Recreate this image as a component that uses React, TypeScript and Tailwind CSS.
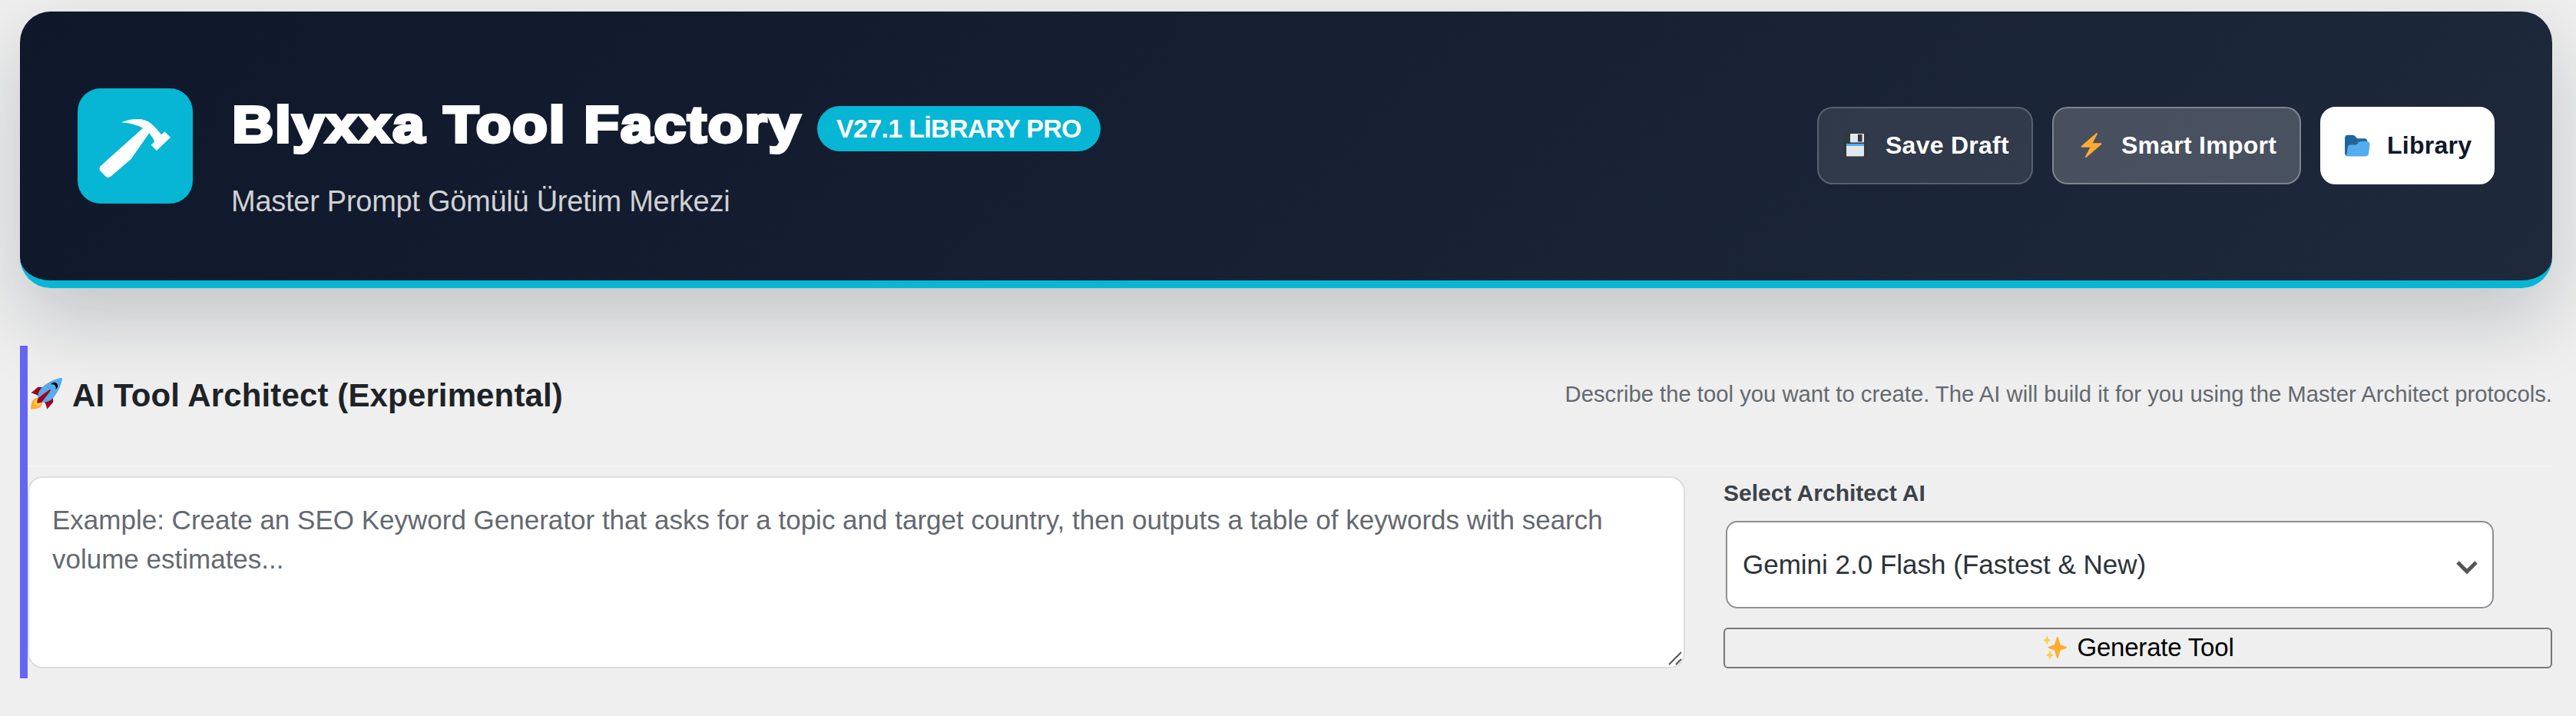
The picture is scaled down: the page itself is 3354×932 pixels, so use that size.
import React from 'react';

interface HeaderButtonProps {
  icon: React.ReactNode;
  label: string;
  className: string;
}

function HeaderButton({ icon, label, className }: HeaderButtonProps) {
  return (
    <button className={`flex h-[101px] items-center rounded-[20px] border-2 pb-px text-[32px] font-bold tracking-[0.25px] whitespace-nowrap ${className}`}>
      <span className="w-[55px]">{icon}</span>
      {label}
    </button>
  );
}

function HammerIcon() {
  return (
    <svg viewBox="0 0 150 150" className="h-[150px] w-[150px]" fill="#fff">
      <path d="M57 44.3Q67 40 78 40Q89 40 95.7 45.7Q103 52 109 60.3L113.3 56.3L121 63.7L103 81L95.7 73.7L100.3 69.3Q98 64 93.3 58.3L71 90Q70 92 68 93.5L43.5 114.5Q40 117 37 115L29.5 107.5Q27.5 104.5 29.5 101.5L85 51.7Q72 45 57 44.3Z" />
    </svg>
  );
}

function FloppyIcon() {
  return (
    <svg viewBox="0 0 32 32" className="h-8 w-8">
      <path fill="#31373d" d="M2 0h28a2 2 0 0 1 2 2v28a2 2 0 0 1-2 2H4l-4-3V2a2 2 0 0 1 2-2z" />
      <rect x="9" y="1" width="18" height="11.5" rx="1" fill="#e1e8ed" />
      <rect x="19" y="2" width="5.5" height="9.5" fill="#31373d" />
      <rect x="4" y="14" width="23" height="16.5" rx="1" fill="#e1e8ed" />
      <path fill="#55acee" d="M5 14h21a1 1 0 0 1 1 1v2H4v-2a1 1 0 0 1 1-1z" />
    </svg>
  );
}

function BoltIcon() {
  return (
    <svg viewBox="0 0 36 36" className="h-8 w-8" fill="#ffac33">
      <path d="M32.938 15.651C32.792 15.26 32.418 15 32 15H19.925L26.89 1.458c.219-.426.106-.947-.271-1.243C26.437.071 26.218 0 26 0c-.233 0-.466.082-.653.243L18 6.588 3.347 19.243c-.316.273-.43.714-.284 1.105S3.582 21 4 21h12.075L9.11 34.542c-.219.426-.106.947.271 1.243.182.144.401.215.619.215.233 0 .466-.082.653-.243L18 29.412l14.653-12.655c.317-.273.43-.714.285-1.106z" />
    </svg>
  );
}

function FolderIcon() {
  return (
    <svg viewBox="0 0 36 36" className="h-[33px] w-[33px]">
      <path fill="#226699" d="M0 29c0 2.209 1.791 4 4 4h24c2.209 0 4-1.791 4-4V12c0-2.209-1.791-4-4-4h-9c-3.562 0-3-5-8.438-5H4C1.791 3 0 4.791 0 7v22z" />
      <path fill="#55acee" d="M30 12h-6.562C18 12 18.562 17 15 17H8c-2.209 0-4 1.791-4 4l-1 8c-.2 2-1 3-2 3 1 1 2 1 3 1h26c2.209 0 4-1.791 4-4l1.5-13c0-2.209-1.791-4-4-4z" />
    </svg>
  );
}

function RocketIcon() {
  return (
    <svg viewBox="0 0 36 36" className="h-[42px] w-[42px]">
      <path fill="#a0041e" d="M1 17l8-7 16 1 1 16-7 8s.001-5.999-6-12-12-6-12-6z" />
      <path fill="#ffac33" d="M.973 35s-.036-7.979 2.985-11S15 21.187 15 21.187 14.999 29 11.999 32c-3 3-11.026 3-11.026 3z" />
      <circle fill="#ffcc4d" cx="9" cy="27" r="4" />
      <path fill="#55acee" d="M35.999 0s-10 0-22 10c-6 5-6 14-4 16s11 2 16-4c10-12 10-22 10-22z" />
      <path d="M26.999 5c-1.623 0-3.013.971-3.641 2.36.502-.227 1.055-.36 1.641-.36 2.209 0 4 1.791 4 4 0 .586-.133 1.139-.359 1.64 1.389-.627 2.359-2.017 2.359-3.64 0-2.209-1.791-4-4-4z" />
      <path fill="#a0041e" d="M8 28s0-4 1-5 13.001-10.999 14-10-9.001 13-10.001 14S8 28 8 28z" />
    </svg>
  );
}

function SparklesIcon() {
  return (
    <svg viewBox="0 0 36 36" className="h-[32px] w-[32px]">
      <path fill="#ffac33" d="M34.347 16.893l-8.899-3.294-3.323-10.891c-.128-.42-.517-.708-.956-.708-.439 0-.828.288-.956.708l-3.322 10.891-8.9 3.294c-.393.146-.653.519-.653.938 0 .418.26.793.653.938l8.895 3.293 3.324 11.223c.126.424.516.715.959.715.442 0 .833-.291.959-.716l3.324-11.223 8.896-3.293c.391-.144.652-.518.652-.937 0-.418-.261-.792-.653-.938z" />
      <path fill="#ffcc4d" d="M14.347 27.894l-2.314-.856-.9-3.3c-.118-.436-.513-.738-.964-.738-.451 0-.846.302-.965.737l-.9 3.3-2.313.856c-.393.146-.653.52-.653.938 0 .418.26.793.653.938l2.301.853.907 3.622c.112.444.511.756.97.756.459 0 .858-.312.97-.757l.907-3.622 2.301-.853c.393-.144.653-.519.653-.937 0-.418-.26-.793-.653-.937z" />
      <path fill="#ffcc4d" d="M10.009 6.231l-2.364-.875-.876-3.365c-.145-.393-.519-.653-.938-.653-.418 0-.792.26-.938.653l-.875 3.365-2.365.875c-.393.146-.653.52-.653.938 0 .418.26.793.653.938l2.365.875.875 3.365c.146.393.52.653.938.653.418 0 .792-.26.938-.653l.875-3.365 2.365-.875c.393-.146.653-.52.653-.938 0-.418-.26-.792-.653-.938z" />
    </svg>
  );
}

export default function App() {
  return (
    <div className="h-[932px] w-[3354px] overflow-hidden bg-[#efefef] pt-[15px] pr-[31px] pl-[26px] font-['Liberation_Sans',Arial,sans-serif]">
      <header className="flex h-[360px] items-center justify-between rounded-[40px] border-b-[10px] border-[#06b6d4] bg-linear-[135deg,#0f172a,#1e293b] px-[75px] shadow-[0_40px_100px_rgba(15,23,42,0.2)]">
        <div className="flex items-center gap-[50px]">
          <div className="h-[150px] w-[150px] rounded-[30px] bg-[#06b6d4]">
            <HammerIcon />
          </div>
          <div className="pt-[28px]">
            <div className="flex h-[90px] items-center">
              <h1 className="w-[763px] origin-left scale-x-[1.13] pb-[10px] pl-px text-[66px] font-bold tracking-[1.8px] whitespace-nowrap text-white [-webkit-text-stroke:4px_white]">Blyxxa Tool Factory</h1>
              <span className="flex h-[59px] w-[369px] items-center justify-center rounded-[30px] bg-[#06b6d4] text-[34px] font-bold tracking-[-0.7px] whitespace-nowrap text-white">V27.1 LİBRARY PRO</span>
            </div>
            <p className="mt-[26px] text-[38px] leading-[48px] tracking-[-0.27px] text-[#cfd1d4]">Master Prompt Gömülü Üretim Merkezi</p>
          </div>
        </div>
        <div className="flex gap-[25px] pb-px">
          <HeaderButton icon={<FloppyIcon />} label="Save Draft" className="w-[281px] border-white/20 bg-white/10 pl-[32px] text-white" />
          <HeaderButton icon={<BoltIcon />} label="Smart Import" className="w-[324px] border-white/30 bg-white/20 pl-[33px] text-white" />
          <HeaderButton icon={<FolderIcon />} label="Library" className="w-[227px] border-white bg-white pl-[30px] text-[#0f172a]" />
        </div>
      </header>

      <section className="mt-[75px] h-[433px] border-l-[10px] border-[#6366f1]">
        <div className="flex h-[158px] items-center justify-between border-b-2 border-[#f0f4f8] pb-[28px]">
          <h2 className="flex items-center pt-px pl-[3px] text-[42px] font-bold tracking-[0.13px] whitespace-nowrap text-[#1d2327]">
            <span className="w-[55px] pb-[4px]">
              <RocketIcon />
            </span>
            AI Tool Architect (Experimental)
          </h2>
          <p className="text-[29.25px] text-[#646970]">Describe the tool you want to create. The AI will build it for you using the Master Architect protocols.</p>
        </div>
        <div className="mt-3 flex gap-[50px]">
          <div className="relative h-[250px] w-[2158px]">
            <textarea
              className="h-[250px] w-full resize-none rounded-[20px] border-2 border-[#ddd] bg-white px-[30px] py-[29px] text-[35px] leading-[51px] placeholder:text-[#646970]"
              placeholder="Example: Create an SEO Keyword Generator that asks for a topic and target country, then outputs a table of keywords with search volume estimates..."
            />
            <svg viewBox="0 0 18 18" className="absolute right-[4px] bottom-[4px] h-[18px] w-[18px]" stroke="#555" strokeWidth="2">
              <path d="M1 17 L17 1 M10 17 L17 10" />
            </svg>
          </div>
          <div className="flex flex-1 flex-col">
            <label className="h-[58px] pt-[3px] text-[30px] leading-[38px] font-bold text-[#3c434a]">Select Architect AI</label>
            <div className="ml-[3px] flex h-[114px] w-[1000px] items-center justify-between rounded-[15px] border-2 border-[#8c8f94] bg-white pr-[19px] pl-[20px] text-[35px] text-[#2c3338]">
              <span>Gemini 2.0 Flash (Fastest &amp; New)</span>
              <svg viewBox="0 0 28 18" className="mt-2 h-[18px] w-[28px]" fill="none" stroke="#555" strokeWidth="5">
                <path d="M2 2 L14 14 L26 2" />
              </svg>
            </div>
            <button className="mt-[25px] flex h-[53px] items-center justify-center gap-[12px] rounded-[6px] border-2 border-[#767676] bg-[#efefef] pb-[2px] pl-[2px] text-[33px] tracking-[-0.2px] text-black">
              <SparklesIcon />
              Generate Tool
            </button>
          </div>
        </div>
      </section>
    </div>
  );
}
